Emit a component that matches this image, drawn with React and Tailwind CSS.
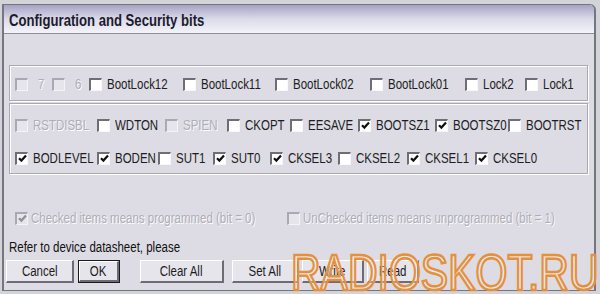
import React from 'react';

const Check = () => (
  <svg width="9" height="9" viewBox="0 0 9 9" className="block">
    <polyline points="1,4.2 3.4,6.6 8,1.6" fill="none" stroke="#111" strokeWidth="2.2" />
  </svg>
);

const Box = ({ checked, disabled }) => (
  <span
    className={`flex items-center justify-center w-[13px] h-[13px] shrink-0 border-t-2 border-l-2 border-r border-b ${
      disabled
        ? 'bg-[#e6e5ec] border-t-[#a9a8b4] border-l-[#a9a8b4] border-r-[#f4f4f8] border-b-[#f4f4f8]'
        : 'bg-white border-t-[#6e6e76] border-l-[#6e6e76] border-r-[#f8f8fb] border-b-[#f8f8fb]'
    }`}
  >
    {checked && (disabled ? <span className="opacity-40"><Check /></span> : <Check />)}
  </span>
);

// the screenshot is squeezed horizontally, so text is narrowed the same way
const Narrow = ({ children, className = '', origin = 'origin-left' }) => (
  <span className={`inline-block whitespace-nowrap scale-x-[0.82] ${origin} ${className}`}>{children}</span>
);

const Item = ({ label, checked, disabled, w, gap = 'ml-[5px]' }) => (
  <div className="flex items-center shrink-0" style={{ width: w }}>
    <Box checked={checked} disabled={disabled} />
    <Narrow
      className={`${gap} leading-none ${
        disabled ? 'text-[#aeadb8] [text-shadow:1px_1px_0_#fff]' : 'text-[#1c1c22]'
      }`}
    >
      {label}
    </Narrow>
  </div>
);

const row1 = [
  { label: '7', disabled: true, w: 37, gap: 'ml-[10px]' },
  { label: '6', disabled: true, w: 37, gap: 'ml-[10px]' },
  { label: 'BootLock12', w: 94 },
  { label: 'BootLock11', w: 92 },
  { label: 'BootLock02', w: 95 },
  { label: 'BootLock01', w: 95 },
  { label: 'Lock2', w: 60 },
  { label: 'Lock1', w: 50 },
];

const row2 = [
  { label: 'RSTDISBL', disabled: true, w: 82 },
  { label: 'WDTON', w: 68 },
  { label: 'SPIEN', disabled: true, w: 62 },
  { label: 'CKOPT', w: 63 },
  { label: 'EESAVE', w: 68 },
  { label: 'BOOTSZ1', checked: true, w: 77 },
  { label: 'BOOTSZ0', checked: true, w: 73 },
  { label: 'BOOTRST', w: 72 },
];

const row3 = [
  { label: 'BODLEVEL', checked: true, w: 82 },
  { label: 'BODEN', checked: true, w: 61 },
  { label: 'SUT1', w: 55 },
  { label: 'SUT0', checked: true, w: 57 },
  { label: 'CKSEL3', checked: true, w: 68 },
  { label: 'CKSEL2', w: 69 },
  { label: 'CKSEL1', checked: true, w: 68 },
  { label: 'CKSEL0', checked: true, w: 70 },
];

const Button = ({ children, w, def, ml }) => (
  <div className={`${ml} shrink-0 h-[23px] ${def ? 'border border-[#1a1a1a]' : ''}`} style={{ width: w }}>
    <div className="h-full flex items-center justify-center bg-[#e6e5ec] border-t border-l border-t-white border-l-white border-r-2 border-b-2 border-r-[#6c6b76] border-b-[#6c6b76] text-[#1c1c22] leading-none">
      <Narrow origin="origin-center">{children}</Narrow>
    </div>
  </div>
);

export default function App() {
  return (
    <div className="relative w-[600px] h-[294px] overflow-hidden bg-[#d3d3da] text-[14px] font-['Liberation_Sans',Arial,sans-serif]">
      <div className="ml-[2px] mr-[4px] mt-[4px] h-[287px] flex flex-col border-l-2 border-r-2 border-t border-b border-[#77767f] rounded-tr-[6px] bg-[#dddce4] overflow-hidden">
        {/* Title bar */}
        <div className="h-[29px] shrink-0 flex items-center pl-[5px] pt-[4px] border-b border-[#8e8d9a] bg-gradient-to-b from-[#a6a3c3] via-[#dcdbea] to-[#f3f3f8]">
          <Narrow className="font-bold text-[16px] text-[#1b1b2c] leading-none">Configuration and Security bits</Narrow>
        </div>

        {/* Body */}
        <div className="flex-1 flex flex-col pl-[5px] pr-[6px]">
          <div className="mt-[31px] h-[36px] flex items-center pl-[5px] pt-[2px] border border-[#a9a8b5] shadow-[inset_1px_1px_0_#fff,1px_1px_0_#fff]">
            {row1.map((it) => (
              <Item key={it.label} {...it} />
            ))}
          </div>

          <div className="mt-[2px] h-[71px] flex flex-col pl-[5px] pt-[13px] gap-[17px] border border-[#a9a8b5] shadow-[inset_1px_1px_0_#fff,1px_1px_0_#fff]">
            <div className="flex items-center h-[16px]">
              {row2.map((it) => (
                <Item key={it.label} {...it} />
              ))}
            </div>
            <div className="flex items-center h-[16px]">
              {row3.map((it) => (
                <Item key={it.label} {...it} />
              ))}
            </div>
          </div>

          <div className="mt-[36px] h-[16px] flex items-center pl-[6px]">
            <Item label="Checked items means programmed (bit = 0)" checked disabled w={272} gap="ml-[3px]" />
            <Item label="UnChecked items means unprogrammed (bit = 1)" disabled w={280} gap="ml-[3px]" />
          </div>

          <div className="mt-[13px] h-[16px] flex items-center text-[14px] text-[#111] leading-none">
            <Narrow>Refer to device datasheet, please</Narrow>
          </div>

          <div className="mt-[5px] flex items-center -ml-[3px]">
            <Button w={68}>Cancel</Button>
            <Button w={42} def ml="ml-[4px]">OK</Button>
            <Button w={84} ml="ml-[20px]">Clear All</Button>
            <Button w={67} ml="ml-[8px]">Set All</Button>
            <Button w={62} ml="ml-[3px]">Write</Button>
            <Button w={52} ml="ml-[3px]">Read</Button>
          </div>
        </div>
      </div>

      {/* Watermark */}
      <div className="absolute left-[291px] top-[248px] text-[50px] leading-none text-[rgba(255,255,255,0.35)] [-webkit-text-stroke:2.5px_#e5903c]">
        <Narrow>RADIOSKOT.RU</Narrow>
      </div>
    </div>
  );
}
